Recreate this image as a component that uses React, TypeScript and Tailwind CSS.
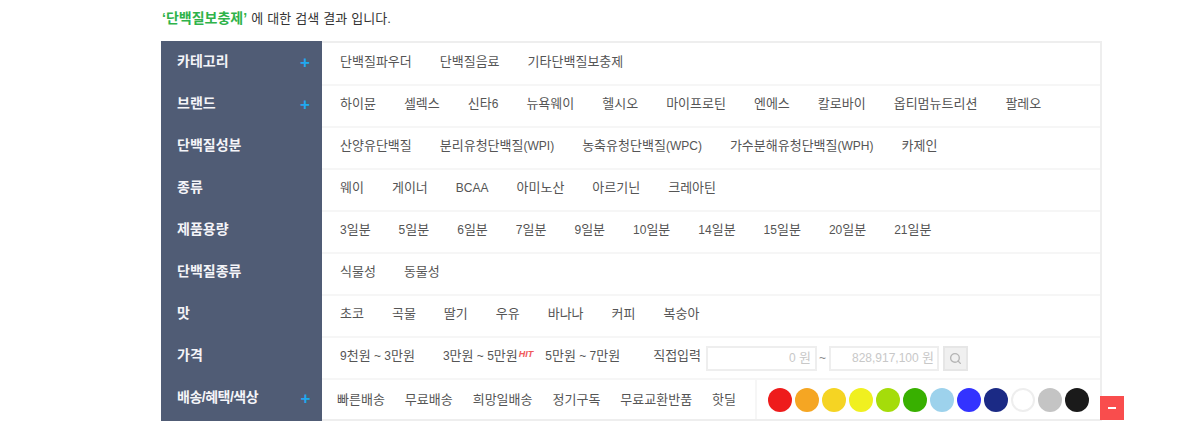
import { Search } from 'lucide-react'

const rows: { label: string; plus?: boolean; items: string[] }[] = [
  { label: '카테고리', plus: true, items: ['단백질파우더', '단백질음료', '기타단백질보충제'] },
  { label: '브랜드', plus: true, items: ['하이뮨', '셀렉스', '신타6', '뉴욕웨이', '헬시오', '마이프로틴', '엔에스', '칼로바이', '옵티멈뉴트리션', '팔레오'] },
  { label: '단백질성분', items: ['산양유단백질', '분리유청단백질(WPI)', '농축유청단백질(WPC)', '가수분해유청단백질(WPH)', '카제인'] },
  { label: '종류', items: ['웨이', '게이너', 'BCAA', '아미노산', '아르기닌', '크레아틴'] },
  { label: '제품용량', items: ['3일분', '5일분', '6일분', '7일분', '9일분', '10일분', '14일분', '15일분', '20일분', '21일분'] },
  { label: '단백질종류', items: ['식물성', '동물성'] },
  { label: '맛', items: ['초코', '곡물', '딸기', '우유', '바나나', '커피', '복숭아'] },
]

const dots = ['bg-[#ee1c1c]', 'bg-[#f5a623]', 'bg-[#f5d423]', 'bg-[#f0f020]', 'bg-[#a5dc0a]', 'bg-[#38b000]', 'bg-[#9dd2ec]', 'bg-[#3333ff]', 'bg-[#1b2a85]', 'bg-white border-2 border-[#eeeeee]', 'bg-[#c4c4c4]', 'bg-[#1a1a1a]']

const shipping = ['빠른배송', '무료배송', '희망일배송', '정기구독', '무료교환반품', '핫딜']

// hangul runs at 13px, ascii runs (digits, WPI, BCAA) a size down like the original
function Txt({ t }: { t: string }) {
  return (
    <span>
      {t.split(/([\x00-\x7f]+)/).map((part, i) =>
        i % 2 ? <span key={i} className="text-[12px]">{part}</span> : part,
      )}
    </span>
  )
}

function Label({ text, plus, className }: { text: string; plus?: boolean; className: string }) {
  return (
    <div className={`flex w-[161px] shrink-0 bg-[#505c75] pl-[16px] pr-[12px] text-[14px] font-bold text-[#f4f4f8] ${className}`}>
      <span className="flex-1 leading-[18px]">{text}</span>
      {plus && <span className="mt-[2px] text-[17px] leading-[17px] font-bold text-[#1fa8f0]">+</span>}
    </div>
  )
}

export default function App() {
  return (
    <div className="relative h-[433px] w-[1197px] overflow-hidden bg-white font-['Liberation_Sans','Noto_Sans_CJK_KR',sans-serif] text-[13px] text-[#555555]">
      <div className="pl-[162px] pt-[9px] text-[13px] leading-[18px] text-[#333333] [word-spacing:0.5px]">
        <span className="text-[14px] font-bold text-[#2fb34a]">‘단백질보충제’</span> 에 대한 검색 결과 입니다.
      </div>
      <div className="ml-[161px] mt-[13px] w-[941px] border-t-2 border-r-2 border-b-2 border-[#eeeeee]">
        {rows.map((r, i) => (
          <div key={r.label} className={`flex border-b-2 border-[#f6f6f6] ${i === 0 ? 'h-[43px]' : 'h-[42px]'}`}>
            <Label text={r.label} plus={r.plus} className={i === 0 ? 'items-start pt-[11px] -mb-[2px] -mt-[2px]' : 'items-start pt-[8px] -mb-[2px]'} />
            <div className="flex items-center gap-[28px] pb-[4px] pl-[18px]">
              {r.items.map((t) => (
                <Txt key={t} t={t} />
              ))}
            </div>
          </div>
        ))}
        <div className="flex h-[42px] border-b-2 border-[#f6f6f6]">
          <Label text="가격" className="items-start pt-[8px] -mb-[2px]" />
          <div className="flex items-center pl-[18px]">
            <span className="mb-[4px]"><Txt t="9천원 ~ 3만원" /></span>
            <span className="mb-[4px] ml-[28px]"><Txt t="3만원 ~ 5만원" /></span>
            <span className="mb-[9px] ml-[1px] text-[9px] font-bold italic leading-[10px] text-[#f05a5a]">HIT</span>
            <span className="mb-[4px] ml-[12px]"><Txt t="5만원 ~ 7만원" /></span>
            <span className="mb-[4px] ml-[33px] mr-[5px]">직접입력</span>
            <div className="flex h-[25px] w-[111px] items-center justify-end border-2 border-[#eeeeee] pr-[4px] text-[#c8c8c8]"><Txt t="0 원" /></div>
            <span className="mx-[2px] w-[8px] text-[12px] text-[#888888]">~</span>
            <div className="flex h-[25px] w-[110px] items-center justify-end border-2 border-[#eeeeee] pr-[3px] text-[#c8c8c8]"><Txt t="828,917,100 원" /></div>
            <div className="ml-[4px] flex h-[25px] w-[25px] items-center justify-center border-2 border-[#e6e6e6] bg-[#f0f0f0]">
              <Search size={13} strokeWidth={2.5} className="text-[#b4b4b4]" />
            </div>
          </div>
        </div>
        <div className="flex h-[39px]">
          <Label text="배송/혜택/색상" plus className="items-start pt-[8px] -mb-[2px] tracking-[-0.5px]" />
          <div className="flex flex-1 items-center gap-[20px] pl-[15px]">
            {shipping.map((t) => (
              <span key={t}>{t}</span>
            ))}
          </div>
          <div className="flex w-[345px] shrink-0 items-center gap-[3px] border-l-2 border-[#f6f6f6] pl-[11px]">
            {dots.map((c) => (
              <span key={c} className={`h-[24px] w-[24px] rounded-full ${c}`} />
            ))}
          </div>
        </div>
      </div>
      <div className="absolute left-[1100px] top-[396px] flex h-[24px] w-[24px] items-center justify-center bg-[#f94d4d]">
        <span className="h-[2px] w-[8px] bg-white" />
      </div>
    </div>
  )
}
